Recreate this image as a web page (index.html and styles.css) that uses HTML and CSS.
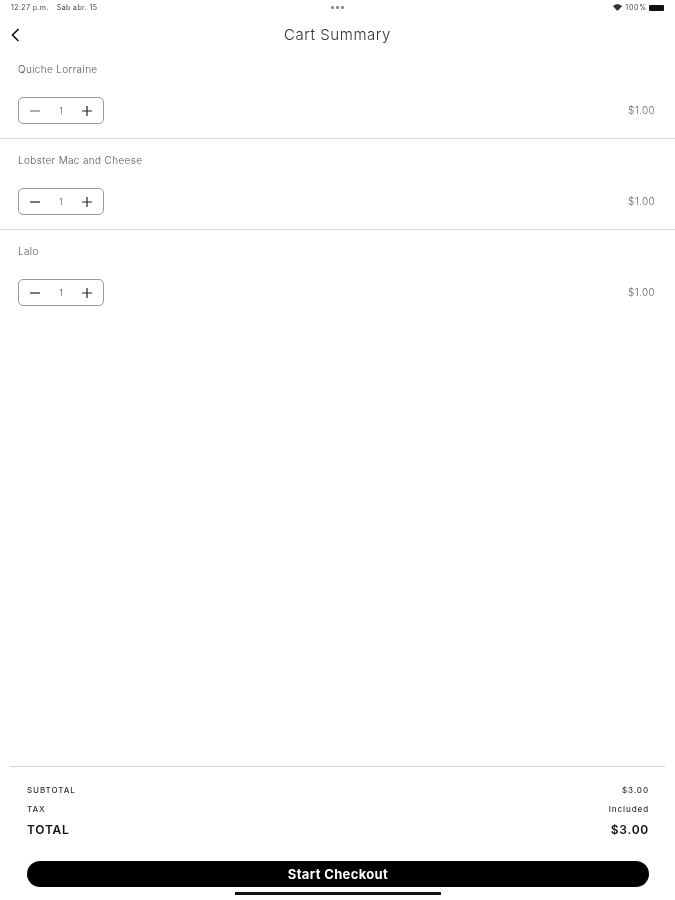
FILE: index.html
```html
<!DOCTYPE html>
<html lang="en">
<head>
<meta charset="utf-8">
<title>Cart Summary</title>
<link rel="stylesheet" href="styles.css">
</head>
<body>
<div class="screen">
  <div class="status">
    <div class="status-left"><span>12:27 p.m.</span><span>Sáb abr. 15</span></div>
    <div class="status-dots"><i></i><i></i><i></i></div>
    <div class="status-right">
      <svg class="wifi" width="9" height="7" viewBox="0 0 9 7"><path d="M0 2.2C2.6-.4 6.4-.4 9 2.2L4.500 7Z" fill="#333"/></svg>
      <span class="pct">100%</span>
      <span class="battery"></span>
    </div>
  </div>
  <header class="nav">
    <button class="back" aria-label="Back">
      <svg width="9" height="14" viewBox="0 0 9 14"><path d="M7.500 1 1.500 7l6 6" fill="none" stroke="#111" stroke-width="1.600"/></svg>
    </button>
    <h1>Cart Summary</h1>
  </header>
  <main class="items">
    <section class="item">
      <div class="item-name">Quiche Lorraine</div>
      <div class="item-row">
        <div class="stepper">
          <svg width="10" height="10" viewBox="0 0 10 10"><path d="M0 5h10" stroke="#777" stroke-width="1.200"/></svg>
          <span>1</span>
          <svg width="10" height="10" viewBox="0 0 10 10"><path d="M0 5h10M5 0v10" stroke="#222" stroke-width="1.200"/></svg>
        </div>
        <div class="price">$1.00</div>
      </div>
    </section>
    <section class="item">
      <div class="item-name">Lobster Mac and Cheese</div>
      <div class="item-row">
        <div class="stepper">
          <svg width="10" height="10" viewBox="0 0 10 10"><path d="M0 5h10" stroke="#222" stroke-width="1.200"/></svg>
          <span>1</span>
          <svg width="10" height="10" viewBox="0 0 10 10"><path d="M0 5h10M5 0v10" stroke="#222" stroke-width="1.200"/></svg>
        </div>
        <div class="price">$1.00</div>
      </div>
    </section>
    <section class="item last">
      <div class="item-name">Lalo</div>
      <div class="item-row">
        <div class="stepper">
          <svg width="10" height="10" viewBox="0 0 10 10"><path d="M0 5h10" stroke="#222" stroke-width="1.200"/></svg>
          <span>1</span>
          <svg width="10" height="10" viewBox="0 0 10 10"><path d="M0 5h10M5 0v10" stroke="#222" stroke-width="1.200"/></svg>
        </div>
        <div class="price">$1.00</div>
      </div>
    </section>
  </main>
  <footer class="summary">
    <div class="lines">
      <div class="line"><span>SUBTOTAL</span><span>$3.00</span></div>
      <div class="line"><span>TAX</span><span>Included</span></div>
      <div class="line total"><span>TOTAL</span><span>$3.00</span></div>
    </div>
    <button class="checkout">Start Checkout</button>
    <div class="home-bar"></div>
  </footer>
</div>
</body>
</html>
```
FILE: styles.css
```css
* { box-sizing: border-box; }
html, body { margin: 0; padding: 0; background: #fff; }
body { font-family: Inter, "Liberation Sans", sans-serif; }
.screen { width: 675px; height: 900px; display: flex; flex-direction: column; overflow: hidden; filter: blur(.6px); }

.status { height: 15px; padding: 0 11px 0 11px; display: grid; grid-template-columns: 1fr auto 1fr; align-items: center; font-size: 7px; color: #444; letter-spacing: .4px; }
.status-left { display: flex; gap: 8px; }
.status-dots { display: flex; gap: 2.500px; }
.status-dots i { width: 2.500px; height: 2.500px; border-radius: 50%; background: #888; }
.status-right { display: flex; align-items: center; justify-content: flex-end; gap: 2px; }
.wifi { margin-right: 1px; }
.pct { letter-spacing: .8px; }
.battery { width: 15px; height: 6px; background: #111; border-radius: 1px; }

.nav { height: 33px; padding-top: 6px; position: relative; display: flex; align-items: center; justify-content: center; }
.nav h1 { margin: 0; font-size: 15px; font-weight: 300; color: #333; letter-spacing: .55px; }
.back { position: absolute; left: 11px; top: 13px; padding: 0; border: 0; background: none; line-height: 0; }

.items { flex: 1; }
.item { height: 91px; padding: 0 20px 0 18px; border-bottom: 1px solid #d8d8d8; display: flex; flex-direction: column; }
.item.last { border-bottom: 0; }
.item-name { margin-top: 14px; font-size: 10px; line-height: 14px; font-weight: 300; color: #555; letter-spacing: .35px; }
.item-row { margin-top: 21px; display: flex; align-items: center; justify-content: space-between; }
.stepper { width: 86px; height: 27px; border: 1px solid #999; border-radius: 5px; padding: 0 11px; display: flex; align-items: center; justify-content: space-between; }
.stepper span { font-size: 9px; font-weight: 300; color: #555; }
.price { font-size: 10px; font-weight: 300; color: #666; letter-spacing: .35px; margin-top: -2px; }

.summary { margin: 0 10px; border-top: 1px solid #d8d8d8; height: 134px; padding: 13px 16px 0 17px; position: relative; }
.lines { display: flex; flex-direction: column; }
.line { height: 19px; display: flex; justify-content: space-between; align-items: center; font-size: 8px; font-weight: 500; color: #333; letter-spacing: .9px; }
.line.total { height: 23px; font-size: 12px; font-weight: 600; color: #111; letter-spacing: .75px; }
.checkout { display: block; width: 100%; height: 26px; margin-top: 20px; border: 0; border-radius: 13px; background: #000; color: #fff; font: 700 13px Inter, "Liberation Sans", sans-serif; letter-spacing: .35px; }
.home-bar { position: absolute; left: 225px; bottom: 5px; width: 206px; height: 3px; background: #111; }
```
